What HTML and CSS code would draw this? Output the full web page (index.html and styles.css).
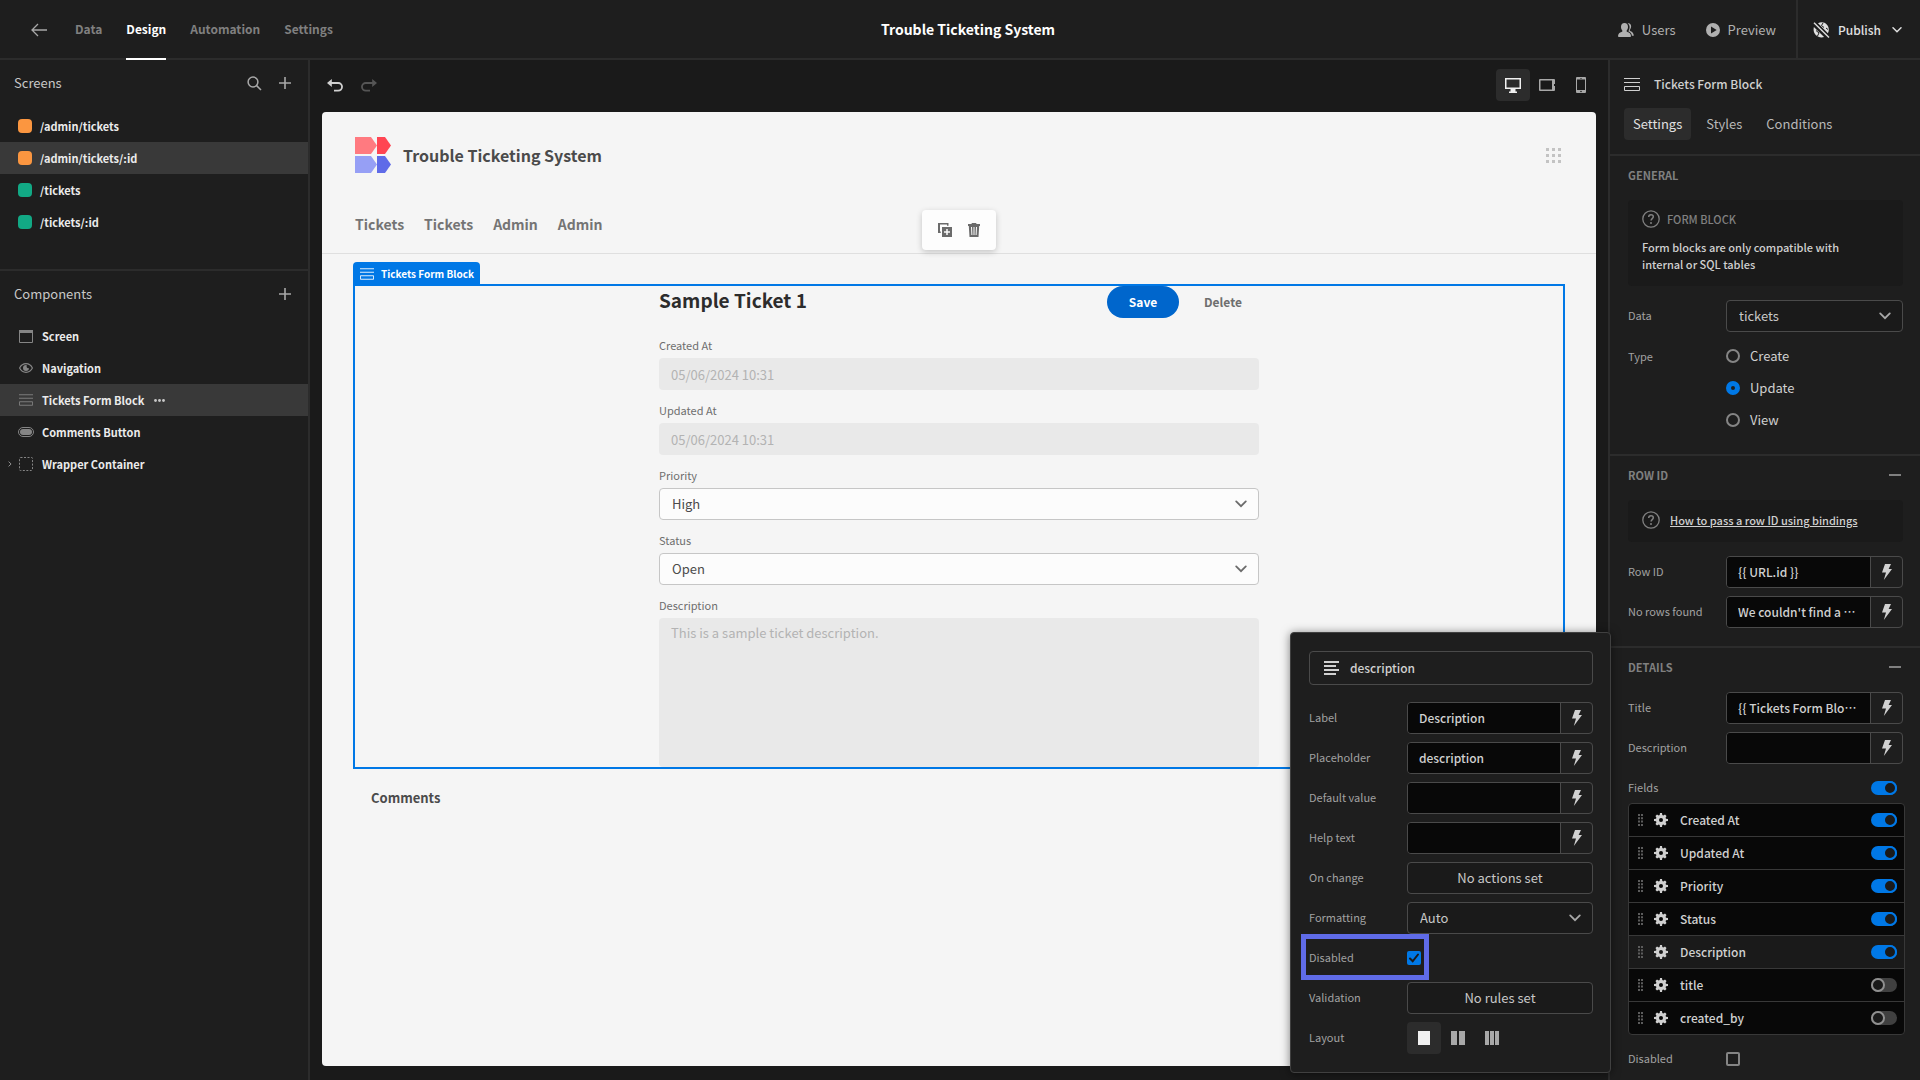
FILE: index.html
```html
<!DOCTYPE html>
<html lang="en">
<head>
<meta charset="utf-8">
<title>Trouble Ticketing System</title>
<link rel="stylesheet" href="styles.css">
</head>
<body>
<svg class="sprite" aria-hidden="true">
  <symbol id="bolt" viewBox="0 0 10 16"><path d="M3 0h6L6.600 5H10L1.800 16 4 8.500H0z"/></symbol>
  <symbol id="chevron" viewBox="0 0 10 6"><path d="M1 .8 5 4.800 9 .8" fill="none" stroke="currentColor" stroke-width="1.500" stroke-linecap="round"/></symbol>
  <symbol id="plus" viewBox="0 0 12 12"><path d="M5.200 0h1.600v5.200H12v1.600H6.800V12H5.200V6.800H0V5.200h5.200z"/></symbol>
  <symbol id="formblock" viewBox="0 0 16 13"><path d="M0 .5h16M0 4.500h16M.5 8.500h15v4H.5z" fill="none" stroke="currentColor"/></symbol>
  <symbol id="help" viewBox="0 0 18 18"><circle cx="9" cy="9" r="8.200" fill="none" stroke="currentColor" stroke-width="1.300"/><path d="M6.700 7.100C6.700 5.500 7.700 4.700 9 4.700s2.300.8 2.300 2.100c0 1.800-2.200 1.900-2.200 3.600" fill="none" stroke="currentColor" stroke-width="1.500"/><circle cx="9" cy="12.900" r="1"/></symbol>
  <symbol id="gear" viewBox="0 0 14 14"><path fill-rule="evenodd" d="M6 0h2l.3 2 1 .4L11 1.500 12.500 3l-.9 1.700.4 1 2 .3v2l-2 .3-.4 1 .9 1.700L11 12.500l-1.700-.9-1 .4L8 14H6l-.3-2-1-.4-1.700.9L1.500 11l.9-1.700-.4-1L0 8V6l2-.3.4-1L1.500 3 3 1.500l1.700.9 1-.4zM7 5a2 2 0 1 0 0 4 2 2 0 0 0 0-4z"/></symbol>
  <symbol id="grip" viewBox="0 0 5 12"><path d="M0 0h2v2H0zM3 0h2v2H3zM0 3.300h2v2H0zM3 3.300h2v2H3zM0 6.600h2v2H0zM3 6.600h2v2H3zM0 9.900h2v2H0zM3 9.900h2v2H3z"/></symbol>
</svg>

<div class="app">
  <header class="topbar">
    <button class="icon-btn back" aria-label="Back"><svg width="16" height="14" viewBox="0 0 16 14"><path d="M7 1 1 7l6 6M1 7h15" fill="none" stroke="currentColor" stroke-width="1.300"/></svg></button>
    <nav class="main-nav">
      <a href="#">Data</a><a href="#" class="active">Design</a><a href="#">Automation</a><a href="#">Settings</a>
    </nav>
    <h1 class="app-name">Trouble Ticketing System</h1>
    <div class="actions">
      <button class="action users"><svg width="16" height="14" viewBox="0 0 16 14"><path d="M6.500 0C8.700 0 10 1.600 10 3.900c0 1.500-.6 2.700-1.300 3.500-.3.700.1 1.200.8 1.500 1.900.7 3.300 1.400 3.500 4.100 0 .6-.3 1-.9 1H.9C.3 14 0 13.600 0 13c.2-2.700 1.600-3.400 3.500-4.100.7-.3 1.100-.8.8-1.500C3.600 6.600 3 5.400 3 3.900 3 1.600 4.300 0 6.500 0z"/><path d="M9.500.3c2.500-.6 3.800 1.200 3.600 3.300-.1 1.400-.5 2.200-1.200 3.100-.4.700 0 1.200.7 1.600 1.700.7 3 1.700 3.200 4.400h-1.900c-.3-2.300-1.400-3.500-3.600-4.400.7-1 1.300-2.300 1.300-4.200 0-1.600-.8-3-2.100-3.800z"/></svg>Users</button>
      <button class="action preview-btn"><svg width="14" height="14" viewBox="0 0 14 14"><path fill-rule="evenodd" d="M7 0a7 7 0 1 0 0 14A7 7 0 0 0 7 0zM5 3.500 10.700 7 5 10.500z"/></svg>Preview</button>
      <button class="action publish"><svg width="17" height="16" viewBox="0 0 17 16"><path d="M5 1.300C6.200.5 7.400.2 8.700.2c4 0 7.100 3.300 7.100 7.300 0 1.400-.3 2.600-.9 3.700zM.9 5l10.200 10C6 16.700.6 13 .6 7.800.6 6.800.7 5.900.9 5z"/><path d="M1 .8 16 15.400" stroke="currentColor" stroke-width="1.400"/><path d="M10 1 8.500 3.500l2.500 2M3 8.500 6 11l-1.500 3M13 6l2 1.500" stroke="#1e1e1e" stroke-width="1" fill="none"/></svg>Publish<svg class="caret" width="10" height="6"><use href="#chevron"/></svg></button>
    </div>
  </header>

  <aside class="left-panel">
    <section class="screens">
      <div class="panel-head"><h2>Screens</h2>
        <button class="icon-btn" aria-label="Search screens"><svg width="15" height="15" viewBox="0 0 15 15"><g fill="none" stroke="currentColor" stroke-width="1.500"><circle cx="6" cy="6" r="4.900"/><path d="m9.600 9.600 4.400 4.400"/></g></svg></button>
        <button class="icon-btn" aria-label="Add screen"><svg width="12" height="12"><use href="#plus"/></svg></button>
      </div>
      <ul class="rows">
        <li><span class="swatch orange"></span>/admin/tickets</li>
        <li class="selected"><span class="swatch orange"></span>/admin/tickets/:id</li>
        <li><span class="swatch green"></span>/tickets</li>
        <li><span class="swatch green"></span>/tickets/:id</li>
      </ul>
    </section>
    <section class="components">
      <div class="panel-head"><h2>Components</h2>
        <button class="icon-btn" aria-label="Add component"><svg width="12" height="12"><use href="#plus"/></svg></button>
      </div>
      <ul class="rows tree">
        <li><span class="twist"></span><span class="comp-icon"><svg width="14" height="13" viewBox="0 0 14 13"><path d="M.5.5h13v12H.5z" fill="none" stroke="currentColor"/><path d="M0 0h14v3H0z"/></svg></span>Screen</li>
        <li><span class="twist"></span><span class="comp-icon"><svg width="14" height="10" viewBox="0 0 14 10"><path d="M.6 5C2 2.200 4.300.7 7 .7S12 2.200 13.400 5C12 7.800 9.700 9.300 7 9.300S2 7.800.6 5z" fill="none" stroke="currentColor" stroke-width="1.200"/><path d="M7 2a3 3 0 1 0 3 3c-1.500.8-3-.8-2.200-2.800z"/></svg></span>Navigation</li>
        <li class="selected"><span class="twist"></span><span class="comp-icon"><svg width="14" height="12"><use href="#formblock"/></svg></span>Tickets Form Block<button class="icon-btn more" aria-label="More"><svg width="11" height="3" viewBox="0 0 11 3"><circle cx="1.500" cy="1.500" r="1.400"/><circle cx="5.500" cy="1.500" r="1.400"/><circle cx="9.500" cy="1.500" r="1.400"/></svg></button></li>
        <li><span class="twist"></span><span class="comp-icon"><svg width="16" height="10" viewBox="0 0 16 10"><rect x=".5" y=".5" width="15" height="9" rx="4.500" fill="none" stroke="currentColor"/><rect x="2" y="2" width="12" height="6" rx="3"/></svg></span>Comments Button</li>
        <li><span class="twist"><svg width="4" height="6" viewBox="0 0 4 6"><path d="m.6.6 2.500 2.400L.6 5.400" fill="none" stroke="currentColor"/></svg></span><span class="comp-icon"><svg width="14" height="14" viewBox="0 0 14 14"><rect x=".5" y=".5" width="13" height="13" rx="1" fill="none" stroke="currentColor" stroke-dasharray="2 1.500"/></svg></span>Wrapper Container</li>
      </ul>
    </section>
  </aside>

  <main class="canvas">
    <div class="canvas-bar">
      <button class="icon-btn undo" aria-label="Undo"><svg width="16" height="13" viewBox="0 0 16 13"><path d="M3 4h8.200a3.600 3.600 0 0 1 0 7.700H7" fill="none" stroke="currentColor" stroke-width="1.800"/><path d="M4.800 0v8L0 4z"/></svg></button>
      <button class="icon-btn redo" aria-label="Redo"><svg width="16" height="13" viewBox="0 0 16 13"><path d="M13 4H4.800a3.600 3.600 0 0 0 0 7.700H9" fill="none" stroke="currentColor" stroke-width="1.800"/><path d="M11.200 0v8L16 4z"/></svg></button>
      <div class="segmented devices">
        <button class="on" aria-label="Desktop"><svg width="16" height="15" viewBox="0 0 16 15"><path fill-rule="evenodd" d="M0 0h16v11h-5.500v2.500H12V15H4v-1.500h1.500V11H0zM1.500 1.500v8h13v-8z"/></svg></button>
        <button aria-label="Tablet"><svg width="16" height="12" viewBox="0 0 16 12"><path fill-rule="evenodd" d="M0 1a1 1 0 0 1 1-1h14a1 1 0 0 1 1 1v4h-1v2h1v4a1 1 0 0 1-1 1H1a1 1 0 0 1-1-1zM1.500 1.500v9h11.500v-9z"/></svg></button>
        <button aria-label="Mobile"><svg width="10" height="16" viewBox="0 0 10 16"><path fill-rule="evenodd" d="M0 1a1 1 0 0 1 1-1h8a1 1 0 0 1 1 1v14a1 1 0 0 1-1 1H1a1 1 0 0 1-1-1zM1 2.500v10.500h8V2.500zM4 .9v.7h2V.9zM5 13.700a.8.8 0 1 0 0 1.600.8.8 0 0 0 0-1.600z"/></svg></button>
      </div>
    </div>

    <div class="preview">
      <div class="site-head">
        <svg width="36" height="36" viewBox="0 0 36 36"><path d="M0 0h16l6 8.500-6 8.500H0z" fill="#ff7a80"/><path d="M22 0h8l6 8.500-6 8.500h-8z" fill="#ff4553"/><path d="M0 19h16l6 8.500-6 8.500H0z" fill="#969ff5"/><path d="M22 19h8l6 8.500-6 8.500h-8z" fill="#5f6be8"/></svg>
        <span class="site-title">Trouble Ticketing System</span>
        <svg class="apps" width="15" height="15" viewBox="0 0 15 15"><path d="M0 0h3v3H0zM6 0h3v3H6zM12 0h3v3h-3zM0 6h3v3H0zM6 6h3v3H6zM12 6h3v3h-3zM0 12h3v3H0zM6 12h3v3H6zM12 12h3v3h-3z"/></svg>
      </div>
      <nav class="site-nav"><a href="#">Tickets</a><a href="#">Tickets</a><a href="#">Admin</a><a href="#">Admin</a></nav>
      <div class="float-bar">
        <button class="icon-btn" aria-label="Duplicate"><svg width="14" height="14" viewBox="0 0 14 14"><path d="M0 0h10.500v2.800H9V1.500H2v7h.8V10H0zM4 4h10v10H4z"/><path d="M9 6v6M6 9h6" stroke="#fcfcfc" stroke-width="1.500"/></svg></button>
        <button class="icon-btn" aria-label="Delete"><svg width="12" height="14" viewBox="0 0 12 14"><path fill-rule="evenodd" d="M3.500 1c0-.6.4-1 1-1h3c.6 0 1 .4 1 1H12v2h-.8l-.7 11h-9L.8 3H0V1zM3 4l.4 8h1L4 4zm2.500 0v8h1V4zM8 4l-.4 8h1L9 4z"/></svg></button>
      </div>

      <div class="selection">
        <span class="selection-tag"><svg width="14" height="12"><use href="#formblock"/></svg>Tickets Form Block</span>
        <form class="ticket">
          <div class="ticket-head"><h2>Sample Ticket 1</h2><button type="button" class="pill primary">Save</button><button type="button" class="pill">Delete</button></div>
          <label for="f1">Created At</label>
          <input id="f1" value="05/06/2024 10:31" disabled>
          <label for="f2">Updated At</label>
          <input id="f2" value="05/06/2024 10:31" disabled>
          <label for="f3">Priority</label>
          <div class="picker light"><select id="f3"><option>High</option></select><svg width="12" height="8"><use href="#chevron"/></svg></div>
          <label for="f4">Status</label>
          <div class="picker light"><select id="f4"><option>Open</option></select><svg width="12" height="8"><use href="#chevron"/></svg></div>
          <label for="f5">Description</label>
          <textarea id="f5" disabled>This is a sample ticket description.</textarea>
        </form>
      </div>
      <button class="comments">Comments</button>
    </div>
  </main>

  <aside class="right-panel">
    <div class="block-head">
      <div class="block-title"><svg width="16" height="13"><use href="#formblock"/></svg><h2>Tickets Form Block</h2></div>
      <div class="tabs"><button class="on">Settings</button><button>Styles</button><button>Conditions</button></div>
    </div>

    <section class="group">
      <div class="group-head"><h3>GENERAL</h3></div>
      <div class="note">
        <div class="note-title"><svg width="18" height="18"><use href="#help"/></svg>FORM BLOCK</div>
        <p>Form blocks are only compatible with<br>internal or SQL tables</p>
      </div>
      <div class="field"><label for="data">Data</label>
        <div class="picker"><select id="data"><option>tickets</option></select><svg width="12" height="8"><use href="#chevron"/></svg></div></div>
      <div class="field top" role="radiogroup" aria-labelledby="type"><span class="name" id="type">Type</span>
        <div class="radios">
          <label><input type="radio" name="type">Create</label>
          <label><input type="radio" name="type" checked>Update</label>
          <label><input type="radio" name="type">View</label>
        </div></div>
    </section>

    <section class="group">
      <div class="group-head"><h3>ROW ID</h3><button class="icon-btn collapse" aria-label="Collapse row ID"></button></div>
      <div class="note link-note"><svg width="18" height="18"><use href="#help"/></svg><a href="#">How to pass a row ID using bindings</a></div>
      <div class="field"><label for="rowid">Row ID</label><div class="bind"><input id="rowid" value="{{ URL.id }}"><button aria-label="Bind"><svg width="10" height="16"><use href="#bolt"/></svg></button></div></div>
      <div class="field"><label for="norows">No rows found</label><div class="bind"><input id="norows" value="We couldn't find a row to display"><button aria-label="Bind"><svg width="10" height="16"><use href="#bolt"/></svg></button></div></div>
    </section>

    <section class="group">
      <div class="group-head"><h3>DETAILS</h3><button class="icon-btn collapse" aria-label="Collapse details"></button></div>
      <div class="field"><label for="title">Title</label><div class="bind"><input id="title" value="{{ Tickets Form Block.Title }}"><button aria-label="Bind"><svg width="10" height="16"><use href="#bolt"/></svg></button></div></div>
      <div class="field"><label for="desc">Description</label><div class="bind"><input id="desc"><button aria-label="Bind"><svg width="10" height="16"><use href="#bolt"/></svg></button></div></div>
      <div>
        <div class="fields-head"><label for="all">Fields</label><input class="switch" type="checkbox" id="all" checked></div>
        <ul class="field-list">
          <li><svg class="grip" width="5" height="12"><use href="#grip"/></svg><svg width="14" height="14"><use href="#gear"/></svg><label for="s1">Created At</label><input class="switch" type="checkbox" id="s1" checked></li>
          <li><svg class="grip" width="5" height="12"><use href="#grip"/></svg><svg width="14" height="14"><use href="#gear"/></svg><label for="s2">Updated At</label><input class="switch" type="checkbox" id="s2" checked></li>
          <li><svg class="grip" width="5" height="12"><use href="#grip"/></svg><svg width="14" height="14"><use href="#gear"/></svg><label for="s3">Priority</label><input class="switch" type="checkbox" id="s3" checked></li>
          <li><svg class="grip" width="5" height="12"><use href="#grip"/></svg><svg width="14" height="14"><use href="#gear"/></svg><label for="s4">Status</label><input class="switch" type="checkbox" id="s4" checked></li>
          <li class="open"><svg class="grip" width="5" height="12"><use href="#grip"/></svg><svg width="14" height="14"><use href="#gear"/></svg><label for="s5">Description</label><input class="switch" type="checkbox" id="s5" checked></li>
          <li><svg class="grip" width="5" height="12"><use href="#grip"/></svg><svg width="14" height="14"><use href="#gear"/></svg><label for="s6">title</label><input class="switch" type="checkbox" id="s6"></li>
          <li><svg class="grip" width="5" height="12"><use href="#grip"/></svg><svg width="14" height="14"><use href="#gear"/></svg><label for="s7">created_by</label><input class="switch" type="checkbox" id="s7"></li>
        </ul>
      </div>
      <div class="field"><label for="dis">Disabled</label><input class="check" type="checkbox" id="dis"></div>
    </section>
  </aside>

  <div class="popover" role="dialog" aria-label="description">
    <div class="popover-title"><svg width="16" height="14" viewBox="0 0 16 14"><path d="M0 0h15v2H0zM0 4h12v2H0zM0 8h15v2H0zM0 12h12v2H0z"/></svg>description</div>
    <div class="field"><label for="p1">Label</label><div class="bind"><input id="p1" value="Description"><button aria-label="Bind"><svg width="10" height="16"><use href="#bolt"/></svg></button></div></div>
    <div class="field"><label for="p2">Placeholder</label><div class="bind"><input id="p2" value="description"><button aria-label="Bind"><svg width="10" height="16"><use href="#bolt"/></svg></button></div></div>
    <div class="field"><label for="p3">Default value</label><div class="bind"><input id="p3"><button aria-label="Bind"><svg width="10" height="16"><use href="#bolt"/></svg></button></div></div>
    <div class="field"><label for="p4">Help text</label><div class="bind"><input id="p4"><button aria-label="Bind"><svg width="10" height="16"><use href="#bolt"/></svg></button></div></div>
    <div class="field"><label for="p5">On change</label><button class="outline" id="p5">No actions set</button></div>
    <div class="field"><label for="p6">Formatting</label><div class="picker"><select id="p6"><option>Auto</option></select><svg width="12" height="8"><use href="#chevron"/></svg></div></div>
    <div class="field marked"><label for="p7">Disabled</label><input class="check" type="checkbox" id="p7" checked></div>
    <div class="field"><label for="p8">Validation</label><button class="outline" id="p8">No rules set</button></div>
    <div class="field"><span class="name">Layout</span>
      <div class="segmented">
        <button class="on" aria-label="One column"><svg width="12" height="14"><path d="M0 0h12v14H0z"/></svg></button>
        <button aria-label="Two columns"><svg width="14" height="14"><path d="M0 0h6v14H0zM8 0h6v14H8z"/></svg></button>
        <button aria-label="Three columns"><svg width="14" height="14"><path d="M0 0h4v14H0zM5 0h4v14H5zM10 0h4v14h-4z"/></svg></button>
      </div></div>
  </div>
</div>
</body>
</html>
```
FILE: styles.css
```css
:root {
  --panel: #1e1e1e;
  --canvas: #1a1a1a;
  --line: #2c2c2c;
  --edge: #4a4a4a;
  --field: #080808;
  --text: #d0d0d0;
  --muted: #a2a2a2;
  --dim: #808080;
  --blue: #0078e6;
}

*, *::before, *::after { box-sizing: border-box; }

body, h1, h2, h3, p, ul { margin: 0; padding: 0; }

ul { list-style: none; }

body, button, input, select, textarea {
  font-family: "Noto Sans CJK KR", "Noto Sans", sans-serif;
  font-size: 13px;
  line-height: 20px;
}

body { background: var(--canvas); color: var(--text); }

a { color: inherit; text-decoration: none; }

svg { display: block; flex: none; fill: currentColor; }

button { border: 0; background: none; color: inherit; padding: 0; }

.sprite { position: absolute; width: 0; height: 0; }

.app {
  position: relative;
  display: grid;
  grid-template-columns: 310px minmax(0, 1fr) 312px;
  grid-template-rows: 60px 1fr;
  min-height: 100vh;
}

.icon-btn { display: flex; align-items: center; color: #a8a8a8; }

/* Top bar */
.topbar {
  grid-column: 1 / -1;
  display: grid;
  grid-template-columns: 1fr auto 1fr;
  grid-template-areas: "left title right";
  padding-left: 31px;
  background: var(--panel);
  border-bottom: 2px solid var(--line);
}

.back { grid-area: left; justify-self: start; }

.main-nav { grid-area: left; display: flex; gap: 24px; margin-left: 44px; height: 60px; }

.main-nav a {
  color: var(--dim);
  font-size: 12px;
  font-weight: 700;
  line-height: 58px;
  border-bottom: 2px solid transparent;
}

.main-nav .active { color: #fff; border-color: #fff; }

.app-name { grid-area: title; margin-right: 15px; font-size: 14px; font-weight: 700; line-height: 58px; color: #fff; }

.actions { grid-area: right; display: flex; justify-content: flex-end; }

.action { display: flex; align-items: center; gap: 8px; color: #b0b0b0; }

.preview-btn { margin: 0 20px 0 30px; }

.publish {
  padding: 0 18px 0 15px;
  border-left: 2px solid var(--line);
  color: #e0e0e0;
  font-size: 12px;
  font-weight: 500;
}

.caret { margin-left: 3px; }

/* Left panel */
.left-panel { background: var(--panel); border-right: 2px solid var(--line); }

.screens { border-bottom: 2px solid var(--line); padding-bottom: 31px; }

.panel-head { display: flex; align-items: center; gap: 17px; height: 46px; padding: 0 17px 0 14px; }

.panel-head h2 { flex: 1; font-size: 13px; font-weight: 400; color: #c8c8c8; }

.rows { padding-top: 4px; }

.rows li {
  display: flex;
  align-items: center;
  height: 32px;
  padding-left: 18px;
  font-size: 11px;
  font-weight: 700;
  color: #ebebeb;
}

.rows .selected { background: #393939; }

.rows.tree { padding-top: 3px; }

.rows.tree li { padding-left: 8px; }

.swatch { width: 14px; height: 14px; border-radius: 4px; margin-right: 8px; }

.orange { background: #fb9640; }

.green { background: #12a985; }

.twist { width: 10px; color: #909090; }

.comp-icon { display: flex; justify-content: center; width: 16px; margin-right: 8px; color: #858585; }

.more { margin-left: 10px; color: #c8c8c8; }

/* Canvas */
.canvas { display: flex; flex-direction: column; padding: 9px 12px 14px; }

.canvas-bar { display: flex; align-items: center; gap: 18px; height: 32px; margin: 0 -2px 11px 5px; }

.undo { color: #d0d0d0; }

.redo { color: #555; }

.devices { margin-left: auto; }

.segmented { display: flex; }

.segmented button {
  display: flex;
  align-items: center;
  justify-content: center;
  width: 34px;
  height: 32px;
  border-radius: 4px;
  color: #a8a8a8;
}

.segmented .on { background: #2c2c2c; color: #f0f0f0; }

.preview { position: relative; flex: 1; background: #f5f5f5; border-radius: 4px; color: #4b4b4b; }

.site-head { display: flex; align-items: center; gap: 12px; padding: 25px 35px 0 33px; }

.site-title { flex: 1; font-size: 16px; font-weight: 700; line-height: 36px; }

.apps { color: #c3c3c3; }

.site-nav {
  display: flex;
  gap: 20px;
  padding: 39px 33px 17px;
  border-bottom: 1px solid #dfdfdf;
  font-size: 14px;
  font-weight: 700;
  line-height: 24px;
  color: #747474;
}

.float-bar {
  position: absolute;
  top: 98px;
  left: 50%;
  display: flex;
  gap: 16px;
  height: 40px;
  margin-left: -37px;
  padding: 0 16px;
  background: #fdfdfd;
  border-radius: 4px;
  box-shadow: 0 2px 6px rgba(0, 0, 0, .2);
}

.float-bar .icon-btn { color: #6b6b6b; }

.selection { position: relative; margin: 30px 31px 0; border: 2px solid var(--blue); }

.selection-tag {
  position: absolute;
  left: -2px;
  bottom: 100%;
  display: flex;
  align-items: center;
  gap: 7px;
  height: 24px;
  padding: 0 6px 0 7px;
  border-radius: 4px 4px 0 0;
  background: var(--blue);
  color: #fff;
  font-size: 10px;
  font-weight: 700;
  white-space: nowrap;
}

.ticket { display: flex; flex-direction: column; width: 600px; max-width: 100%; margin: 0 auto; }

.ticket-head { display: flex; gap: 8px; margin-bottom: 16px; }

.ticket-head h2 { flex: 1; font-size: 19px; font-weight: 700; line-height: 28px; color: #2c2c2c; }

.pill { width: 72px; height: 32px; border-radius: 16px; font-size: 12px; font-weight: 700; color: #6e6e6e; }

.primary { background: #0066cc; color: #fff; }

.ticket label { height: 24px; font-size: 11px; line-height: 22px; color: #6e6e6e; }

.ticket input, .ticket textarea {
  height: 32px;
  margin-bottom: 9px;
  padding: 0 12px;
  border: 0;
  border-radius: 4px;
  background: #e9e9e9;
  color: #b3b3b3;
}

.ticket textarea { height: 149px; margin: 0; padding: 5px 12px; resize: none; }

.comments { margin: 19px 49px; font-weight: 700; }

/* Pickers, bound inputs and toggles */
.picker { position: relative; }

.picker select {
  appearance: none;
  width: 100%;
  height: 32px;
  padding: 0 12px;
  border: 1px solid var(--edge);
  border-radius: 4px;
  background: #1a1a1a;
  color: #c8c8c8;
}

.picker svg { position: absolute; right: 12px; top: 12px; color: #a8a8a8; }

.light { margin-bottom: 9px; }

.light select { background: #fcfcfc; border-color: #c6c6c6; color: #4b4b4b; }

.light svg { color: #6b6b6b; }

.bind { display: flex; border: 1px solid var(--edge); border-radius: 4px; overflow: hidden; }

.bind input {
  flex: 1;
  min-width: 0;
  height: 30px;
  padding: 0 11px 2px;
  border: 0;
  background: var(--field);
  color: var(--text);
  font-size: 12px;
  font-weight: 500;
  text-overflow: ellipsis;
}

.bind button {
  display: flex;
  align-items: center;
  justify-content: center;
  width: 32px;
  border-left: 1px solid var(--edge);
}

.check, .radios input {
  appearance: none;
  width: 14px;
  height: 14px;
  margin: 0;
  border: 2px solid #858585;
  border-radius: 2px;
}

.check:checked {
  border: 0;
  background: var(--blue) url("data:image/svg+xml,%3Csvg xmlns='http://www.w3.org/2000/svg' viewBox='0 0 14 14'%3E%3Cpath d='M3 7.500 5.700 10.300 11 3.500' fill='none' stroke='%231a1a1a' stroke-width='2' stroke-linecap='round'/%3E%3C/svg%3E");
}

.radios input { border-radius: 50%; }

.radios input:checked { border: 5px solid var(--blue); }

.switch {
  appearance: none;
  display: flex;
  width: 26px;
  height: 14px;
  margin: 0;
  border-radius: 7px;
  background: #404040;
}

.switch::before {
  content: "";
  width: 14px;
  height: 14px;
  border: 2px solid #909090;
  border-radius: 50%;
  background: #1a1a1a;
}

.switch:checked { background: var(--blue); justify-content: flex-end; }

.switch:checked::before { border-color: var(--blue); }

/* Right panel */
.right-panel { background: var(--panel); border-left: 2px solid var(--line); }

.block-head { padding: 12px 14px 14px; border-bottom: 2px solid var(--line); }

.block-title { display: flex; align-items: center; gap: 14px; height: 24px; margin-bottom: 12px; }

.block-title h2 { font-size: 12px; font-weight: 500; }

.tabs { display: flex; gap: 6px; }

.tabs button { height: 32px; padding: 0 9px; border-radius: 4px; color: #b8b8b8; }

.tabs .on { background: #2c2c2c; color: #e0e0e0; }

.group {
  display: flex;
  flex-direction: column;
  gap: 8px;
  padding: 0 17px 18px 18px;
  border-bottom: 2px solid var(--line);
}

.group:last-child { border: 0; padding-bottom: 5px; }

.group-head { display: flex; align-items: center; justify-content: space-between; height: 38px; margin-bottom: -2px; }

.group-head h3 { font-size: 11px; font-weight: 700; color: var(--dim); }

.collapse { width: 12px; height: 2px; margin-right: 2px; background: #808080; }

.note { margin-bottom: 6px; padding: 9px 14px 13px; border-radius: 4px; background: #1a1a1a; }

.note p { font-size: 11px; font-weight: 500; line-height: 17px; }

.note-title {
  display: flex;
  align-items: center;
  gap: 7px;
  height: 20px;
  margin-bottom: 10px;
  font-size: 11px;
  font-weight: 500;
  color: var(--dim);
}

.link-note { display: flex; align-items: center; gap: 10px; height: 42px; padding: 0 14px 2px; color: var(--dim); }

.link-note a { font-size: 11px; font-weight: 500; color: var(--text); text-decoration: underline; }

.field { display: grid; grid-template-columns: 98px minmax(0, 1fr); align-items: center; min-height: 32px; }

.field > label, .name, .fields-head label { padding-bottom: 2px; font-size: 11px; color: var(--muted); }

.field.top { align-items: start; }

.field.top .name { line-height: 32px; }

.radios label { display: flex; align-items: center; gap: 10px; height: 32px; }

.fields-head { display: flex; align-items: center; justify-content: space-between; height: 31px; padding-right: 6px; }

.field-list { margin-right: -2px; border: 1px solid #383838; border-radius: 4px; background: var(--field); }

.field-list li { display: flex; align-items: center; height: 33px; padding: 0 7px 0 9px; border-bottom: 1px solid #383838; }

.field-list li:last-child { height: 32px; border: 0; }

.field-list .open { background: #1a1a1a; }

.field-list label { flex: 1; margin-left: 12px; font-size: 12px; font-weight: 500; }

.grip { margin-right: 11px; color: #5c5c5c; }

/* Field editor popover */
.popover {
  position: absolute;
  right: 309px;
  bottom: 7px;
  display: flex;
  flex-direction: column;
  gap: 8px;
  width: 321px;
  padding: 18px 17px 18px 18px;
  background: var(--panel);
  border: 1px solid #404040;
  border-radius: 4px;
  box-shadow: 0 1px 10px rgba(0, 0, 0, .5);
}

.popover-title {
  display: flex;
  align-items: center;
  gap: 10px;
  height: 34px;
  margin-bottom: 9px;
  padding-left: 14px;
  border: 1px solid var(--edge);
  border-radius: 4px;
  font-size: 12px;
  font-weight: 500;
}

.outline { height: 32px; border: 1px solid var(--edge); border-radius: 4px; background: #1a1a1a; color: #c8c8c8; }

.marked { position: relative; }

.marked::after {
  content: "";
  position: absolute;
  inset: -8px auto -6px -8px;
  width: 128px;
  border: 5px solid #5f6be8;
  pointer-events: none;
}
```
